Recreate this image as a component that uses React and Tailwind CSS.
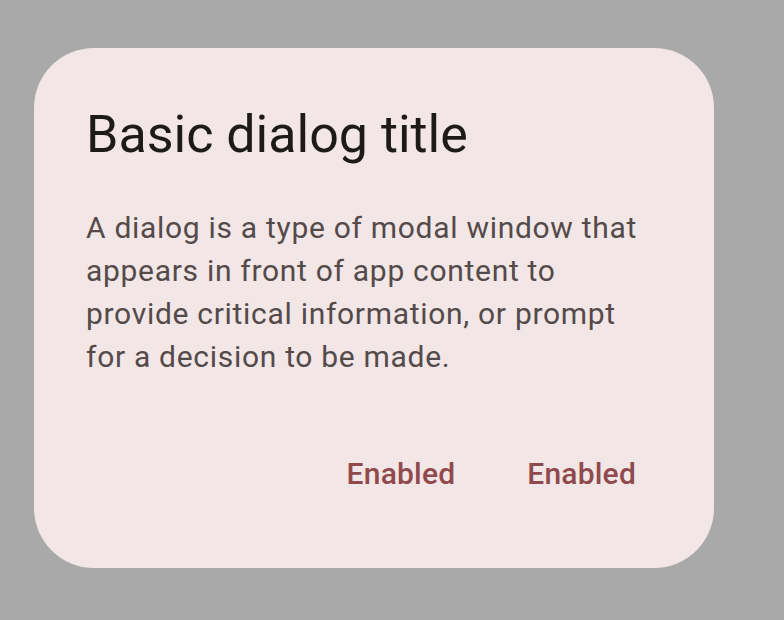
export default function App() {
  return (
    <div className="w-[784px] h-[620px] bg-[#a9a9a9] overflow-hidden" style={{ fontFamily: "Roboto, sans-serif" }}>
      <div className="ml-[34px] mt-[48px] w-[680px] h-[520px] rounded-[60px] bg-[#f2e6e6] px-[52px] pt-[52px] pb-[52px] flex flex-col">
        <h1 className="text-[52px] leading-[69px] text-[#1e1a1a] font-normal">Basic dialog title</h1>
        <p className="mt-[37px] w-[560px] text-[30px] leading-[43px] tracking-[0.7px] text-[#554a4a]">
          A dialog is a type of modal window that appears in front of app content to provide critical information, or prompt for a decision to be made.
        </p>
        <div className="mt-[52px] flex justify-end gap-[20px]">
          <button className="h-[86px] px-[26px] text-[30px] font-medium tracking-[0.2px] text-[#904a4e]">Enabled</button>
          <button className="h-[86px] px-[26px] text-[30px] font-medium tracking-[0.2px] text-[#904a4e]">Enabled</button>
        </div>
      </div>
    </div>
  );
}
